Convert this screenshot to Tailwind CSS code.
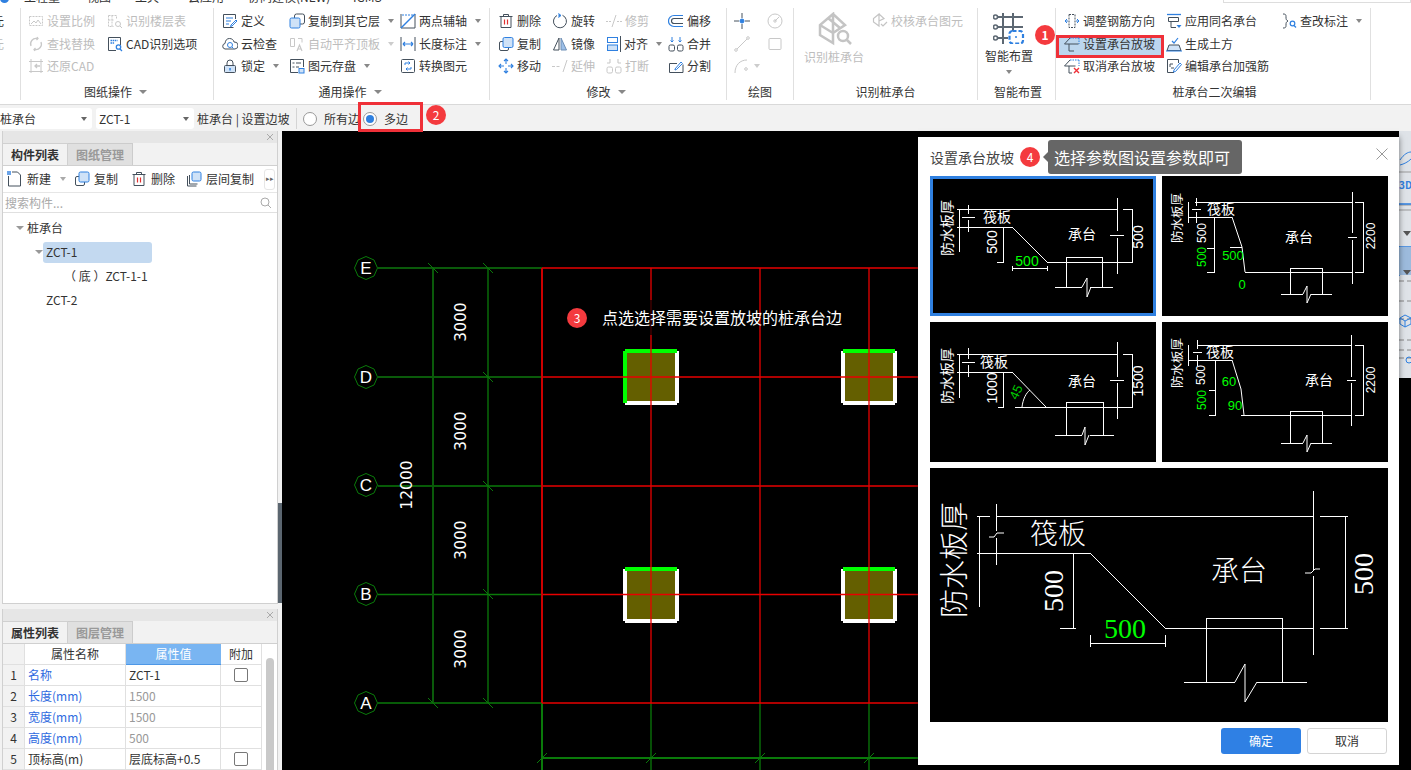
<!DOCTYPE html>
<html lang="zh">
<head>
<meta charset="utf-8">
<title>设置承台放坡</title>
<script src="https://cdn.jsdelivr.net/npm/@tailwindcss/browser@4"></script>
</head>
<body class="bg-white">
<div class="relative w-[1411px] h-[770px] overflow-hidden flex flex-col bg-white text-xs text-[#333] font-['Noto_Sans_CJK_SC',sans-serif]">

  <!-- clipped menu row -->
  <div class="relative h-[5px] shrink-0 overflow-hidden bg-white">
    <div class="absolute left-0 -top-[6px] w-[9px] h-[9px] rounded-full bg-[#2f80e0]"></div>
    <div class="absolute left-[24px] -top-[11px] flex text-xs whitespace-nowrap">
      <span class="w-[63px]">工程量</span><span class="w-[48px]">视图</span><span class="w-[53px]">工具</span><span class="w-[60px]">云应用</span><span class="w-[105px]">协同建模(NEW)</span><span>IGMS</span>
    </div>
    <div class="absolute left-[1223px] -top-[16px] w-[188px] h-[19px] border border-[#ddd] bg-white"></div>
  </div>

  <!-- ribbon -->
  <div class="flex h-[100px] shrink-0 border-b border-[#d9d9d9] bg-white">
    <div class="w-[20px] overflow-hidden pt-[5px]">
      <div class="h-[22.5px] flex items-center -ml-[8px]">元</div>
      <div class="h-[22.5px] flex items-center -ml-[8px] text-[#bdbdbd]">元</div>
    </div>
    <div class="w-px h-[92px] mt-[3px] bg-[#e0e0e0]"></div>

    <!-- 图纸操作 -->
    <div class="w-[192px] flex flex-col">
      <div class="h-[74px] pt-[5px] pl-[7px] grid grid-cols-[79px_1fr] auto-rows-[22.5px] items-center text-[#bdbdbd]">
        <div class="flex items-center gap-[3px]"><svg class="w-4 h-4" viewBox="0 0 16 16" fill="none" stroke="#c8c8c8"><rect x="1.500" y="3.500" width="13" height="9" stroke-dasharray="2 1"/><path d="M3 11l3-3 2 2 2-3 3 4"/></svg>设置比例</div>
        <div class="flex items-center gap-[3px]"><svg class="w-4 h-4" viewBox="0 0 16 16" fill="none" stroke="#c8c8c8"><path d="M1.500 2.500h8v4M1.500 2.500v11h5M5 2.500v11M1.500 7h5" stroke-dasharray="2 1"/><circle cx="11" cy="11" r="2.500"/><path d="M13 13l2 2"/></svg>识别楼层表</div>
        <div class="flex items-center gap-[3px]"><svg class="w-4 h-4" viewBox="0 0 16 16" fill="none" stroke="#c8c8c8"><path d="M3 10a5.500 5.500 0 0 1 6-7.500M13 6a5.500 5.500 0 0 1-6 7.500M9 1l1 1.500L8.500 4M7 15l-1-1.500L7.500 12" stroke-width="1.300"/></svg>查找替换</div>
        <div class="flex items-center gap-[3px] text-[#333]"><svg class="w-4 h-4" viewBox="0 0 16 16" fill="none" stroke="#44505c"><path d="M9 14.500H1.500v-13h12V9"/><path d="M3.500 4.500h7M3.500 7h4" stroke="#2f80e0" stroke-width="1.500" stroke-dasharray="1.500 .6"/><circle cx="11.500" cy="11" r="2.200" stroke="#2f80e0" stroke-width="1.300"/><path d="M13 13l2 2" stroke="#2f80e0" stroke-width="1.300"/></svg>CAD识别选项</div>
        <div class="flex items-center gap-[3px]"><svg class="w-4 h-4" viewBox="0 0 16 16" fill="none" stroke="#c8c8c8"><path d="M1 3.500h14M3 1v14M1 13.500h14M13 1v14"/><path d="M12 8H7M9 6L7 8l2 2" stroke-width="1.300"/></svg>还原CAD</div>
        <div></div>
      </div>
      <div class="h-[25px] flex items-center justify-center gap-[7px] pr-[3px]">图纸操作<span class="w-0 h-0 border-x-[4px] border-x-transparent border-t-[4px] border-t-[#888]"></span></div>
    </div>
    <div class="w-px h-[92px] mt-[3px] bg-[#e0e0e0]"></div>

    <!-- 通用操作 -->
    <div class="w-[275px] flex flex-col">
      <div class="h-[74px] pt-[5px] pl-[8px] grid grid-cols-[67px_111px_1fr] auto-rows-[22.5px] items-center">
        <div class="flex items-center gap-[3px]"><svg class="w-4 h-4" viewBox="0 0 16 16" fill="none" stroke="#44505c"><path d="M13.500 6V1.500h-12v13h10"/><path d="M4 5h7M4 8h5M4 11h3" stroke="#2f80e0"/><path d="M9 12l5-5 1 1-5 5-1.500.5z" stroke="#2f80e0"/></svg>定义</div>
        <div class="flex items-center gap-[3px]"><svg class="w-4 h-4" viewBox="0 0 16 16" fill="none"><rect x="5.500" y="1" width="10" height="10" rx="2" stroke="#44505c"/><rect x="1" y="5" width="10" height="10" rx="1.500" fill="#cfe2f7" stroke="#2f80e0"/></svg>复制到其它层<span class="ml-[5px] w-0 h-0 border-x-[3px] border-x-transparent border-t-[4px] border-t-[#888]"></span></div>
        <div class="flex items-center gap-[3px]"><svg class="w-4 h-4" viewBox="0 0 16 16" fill="none" stroke="#44505c"><path d="M1 1v14M15 1v14M1 15h14"/><path d="M1 15L15 1" stroke="#2f80e0" stroke-width="1.500"/><path d="M2 2h12" stroke="#2f80e0" stroke-dasharray="2 1"/></svg>两点辅轴<span class="ml-[5px] w-0 h-0 border-x-[3px] border-x-transparent border-t-[4px] border-t-[#888]"></span></div>

        <div class="flex items-center gap-[3px]"><svg class="w-4 h-4" viewBox="0 0 16 16" fill="none" stroke="#44505c"><path d="M4 13H3a2.800 2.800 0 0 1 0-5.500C3.400 4 5 2.500 7.500 2.500S11.600 4 12 6a3.500 3.500 0 0 1 1 7h-9z"/><circle cx="8" cy="9" r="2.500" stroke="#2f80e0"/><path d="M10 11l1.500 1.500" stroke="#2f80e0"/></svg>云检查</div>
        <div class="flex items-center gap-[3px] text-[#bdbdbd]"><svg class="w-4 h-4" viewBox="0 0 16 16" fill="none" stroke="#c8c8c8"><path d="M1.500 2.500h4v8h-4zM9 2.500h4v4"/><path d="M8 15l2.500-6 2.500 6M9 13h3" stroke-width="1.200"/></svg>自动平齐顶板<span class="ml-[5px] w-0 h-0 border-x-[3px] border-x-transparent border-t-[4px] border-t-[#ccc]"></span></div>
        <div class="flex items-center gap-[3px]"><svg class="w-4 h-4" viewBox="0 0 16 16" fill="none" stroke="#44505c"><path d="M1 1v14M15 1v14"/><path d="M3 8h10M3 8l2-2M3 8l2 2M13 8l-2-2M13 8l-2 2" stroke="#2f80e0" stroke-width="1.200"/></svg>长度标注<span class="ml-[5px] w-0 h-0 border-x-[3px] border-x-transparent border-t-[4px] border-t-[#888]"></span></div>

        <div class="flex items-center gap-[3px]"><svg class="w-4 h-4" viewBox="0 0 16 16" fill="none" stroke="#44505c"><rect x="2.500" y="7.500" width="11" height="7" rx="1" fill="#cfe2f7"/><path d="M5 7.500V5a3 3 0 0 1 6 0v2.500"/><path d="M8 10v2.500" stroke="#2f80e0" stroke-width="1.500"/></svg>锁定<span class="ml-[5px] w-0 h-0 border-x-[3px] border-x-transparent border-t-[4px] border-t-[#888]"></span></div>
        <div class="flex items-center gap-[3px]"><svg class="w-4 h-4" viewBox="0 0 16 16" fill="none" stroke="#44505c"><path d="M9 14.500H1.500v-13h13V9"/><path d="M3.500 5h2M3.500 9h2M7 5h5M7 9h3"/><rect x="10" y="10.500" width="5" height="4.500" fill="#cfe2f7" stroke="#2f80e0"/></svg>图元存盘<span class="ml-[5px] w-0 h-0 border-x-[3px] border-x-transparent border-t-[4px] border-t-[#888]"></span></div>
        <div class="flex items-center gap-[3px]"><svg class="w-4 h-4" viewBox="0 0 16 16" fill="none" stroke="#44505c"><rect x="1.500" y="1.500" width="13" height="13" rx="1"/><path d="M5 7V5h5M8.500 3.500L10 5 8.500 6.500M11 9v2H6M7.500 9.500L6 11l1.500 1.500" stroke="#2f80e0"/></svg>转换图元</div>
      </div>
      <div class="h-[25px] flex items-center justify-center gap-[7px] pr-[3px]">通用操作<span class="w-0 h-0 border-x-[4px] border-x-transparent border-t-[4px] border-t-[#888]"></span></div>
    </div>
    <div class="w-px h-[92px] mt-[3px] bg-[#e0e0e0]"></div>

    <!-- 修改 -->
    <div class="w-[236px] flex flex-col">
      <div class="h-[74px] pt-[5px] pl-[8px] grid grid-cols-[54px_54px_62px_1fr] auto-rows-[22.5px] items-center">
        <div class="flex items-center gap-[3px]"><svg class="w-4 h-4" viewBox="0 0 16 16" fill="none" stroke="#44505c"><path d="M1.500 3.500h13M3 3.500v11h10v-11M5.500 3.500V1.500h5v2"/><path d="M6.500 6.500v5M9.500 6.500v5" stroke="#e03030" stroke-width="1.200"/></svg>删除</div>
        <div class="flex items-center gap-[3px]"><svg class="w-4 h-4" viewBox="0 0 16 16" fill="none" stroke="#44505c"><path d="M10.500 2.300A6.500 6.500 0 1 1 5 2.500"/><path d="M6.500 .5L9 2.500 6.500 4.500" fill="#2f80e0" stroke="#2f80e0"/></svg>旋转</div>
        <div class="flex items-center gap-[3px] text-[#bdbdbd]"><svg class="w-4 h-4" viewBox="0 0 16 16" fill="none" stroke="#c8c8c8"><path d="M0 8.500h5M11 8.500h5" stroke-dasharray="2 1"/><path d="M6 14L10 2"/></svg>修剪</div>
        <div class="flex items-center gap-[3px]"><svg class="w-4 h-4" viewBox="0 0 16 16" fill="none" stroke="#2f80e0" stroke-width="1.200"><path d="M15 2.500H6a5.500 5.500 0 0 0 0 11h9"/><path d="M15 5.500H6a2.500 2.500 0 0 0 0 5h9" stroke="#44505c"/></svg>偏移</div>

        <div class="flex items-center gap-[3px]"><svg class="w-4 h-4" viewBox="0 0 16 16" fill="none" stroke="#44505c"><rect x="1.500" y="5.500" width="9" height="9" rx="1.500"/><rect x="5" y="1.500" width="10" height="10" rx="1.500" fill="#cfe2f7" stroke="#2f80e0"/></svg>复制</div>
        <div class="flex items-center gap-[3px]"><svg class="w-4 h-4" viewBox="0 0 16 16" fill="none" stroke="#44505c"><path d="M7 2L1.500 14H7z"/><path d="M9 2l5.500 12H9z" fill="#9cbfe8" stroke="#6f8fb5"/></svg>镜像</div>
        <div class="flex items-center gap-[3px]"><svg class="w-4 h-4" viewBox="0 0 16 16" fill="none" stroke="#2f80e0"><rect x="1.500" y="1.500" width="10" height="5"/><rect x="1.500" y="9" width="10" height="5.500" fill="#cfe2f7"/><path d="M14.500 0v16" stroke="#44505c"/></svg><span class="-ml-[1px]">对齐</span><span class="ml-[5px] w-0 h-0 border-x-[3px] border-x-transparent border-t-[4px] border-t-[#888]"></span></div>
        <div class="flex items-center gap-[3px]"><svg class="w-4 h-4" viewBox="0 0 16 16" fill="none" stroke="#44505c"><rect x="1" y="9" width="5.500" height="6" rx="1.500"/><rect x="9.500" y="9" width="5.500" height="6" rx="1.500"/><path d="M4 1v5M2.500 4.500L4 6l1.500-1.500M12 1v5M10.500 4.500L12 6l1.500-1.500" stroke="#2f80e0"/></svg>合并</div>

        <div class="flex items-center gap-[3px]"><svg class="w-4 h-4" viewBox="0 0 16 16" fill="none" stroke="#2f80e0" stroke-width="1.100"><path d="M8 1v5M8 10v5M1 8h5M10 8h5M6 3l2-2 2 2M6 13l2 2 2-2M3 6L1 8l2 2M13 6l2 2-2 2"/></svg>移动</div>
        <div class="flex items-center gap-[3px] text-[#bdbdbd]"><svg class="w-4 h-4" viewBox="0 0 16 16" fill="none" stroke="#c8c8c8"><path d="M0 8.500h9" stroke-dasharray="3 1.500"/><path d="M11 14l4-12"/></svg>延伸</div>
        <div class="flex items-center gap-[3px] text-[#bdbdbd]"><svg class="w-4 h-4" viewBox="0 0 16 16" fill="none" stroke="#c8c8c8"><rect x="1" y="9" width="5.500" height="6" rx="1.500"/><rect x="9.500" y="9" width="5.500" height="6" rx="1.500"/><path d="M4 1v4M12 1v4M1 5h3M12 5h3" stroke-width="1.100"/></svg>打断</div>
        <div class="flex items-center gap-[3px]"><svg class="w-4 h-4" viewBox="0 0 16 16" fill="none" stroke="#44505c"><path d="M15 6.500v8H1.500v-9H9"/><path d="M7 11l6-7 1.500 1.500L8.500 11.500 7 12z" stroke="#2f80e0"/></svg>分割</div>
      </div>
      <div class="h-[25px] flex items-center justify-center gap-[7px] pr-[4px]">修改<span class="w-0 h-0 border-x-[4px] border-x-transparent border-t-[4px] border-t-[#888]"></span></div>
    </div>
    <div class="w-px h-[92px] mt-[3px] bg-[#e0e0e0]"></div>

    <!-- 绘图 -->
    <div class="w-[66px] flex flex-col">
      <div class="h-[74px] pt-[5px] pl-[7px] grid grid-cols-[33px_33px] auto-rows-[22.5px] items-center">
        <svg class="w-4 h-4" viewBox="0 0 16 16" fill="none" stroke="#2f80e0"><path d="M8 0v5M8 11v5M0 8h5M11 8h5" stroke="#44505c"/><circle cx="8" cy="8" r="2" fill="#2f80e0"/></svg>
        <svg class="w-4 h-4" viewBox="0 0 16 16" fill="none" stroke="#c8c8c8"><circle cx="8" cy="8" r="7"/><circle cx="8" cy="8" r="1.200"/><path d="M8 8l4-4"/></svg>
        <svg class="w-4 h-4" viewBox="0 0 16 16" fill="none" stroke="#c8c8c8"><path d="M2 14L14 2"/><circle cx="2" cy="14" r="1.300" fill="white"/><circle cx="14" cy="2" r="1.300" fill="white"/></svg>
        <svg class="w-4 h-4" viewBox="0 0 16 16" fill="none" stroke="#c8c8c8"><rect x="2" y="2.500" width="12" height="11" rx="1"/></svg>
        <div class="flex items-center gap-[4px]"><svg class="w-4 h-4" viewBox="0 0 16 16" fill="none" stroke="#c8c8c8"><path d="M1 15C1 7 6 2 13 2"/><circle cx="12" cy="11" r="1.300"/></svg><span class="w-0 h-0 border-x-[3px] border-x-transparent border-t-[4px] border-t-[#ccc]"></span></div>
      </div>
      <div class="h-[25px] flex items-center justify-center">绘图</div>
    </div>
    <div class="w-px h-[92px] mt-[3px] bg-[#e0e0e0]"></div>

    <!-- 识别桩承台 -->
    <div class="w-[183px] flex flex-col">
      <div class="h-[74px] pt-[5px] pl-[10px] flex text-[#bdbdbd]">
        <div class="w-[68px] flex flex-col">
          <svg class="ml-[13px] mt-[2px] w-[35px] h-[34px]" viewBox="0 0 35 34" fill="none" stroke="#c4c4c4" stroke-width="2.500"><path d="M16 2L3 13l0 10 13 8V20zM16 2l12 11-12 8M3 13l13 8M11 6l12 10"/><circle cx="26" cy="24" r="5"/><path d="M30 28l4 4"/></svg>
          <span class="mt-[3px] whitespace-nowrap">识别桩承台</span>
        </div>
        <div class="flex items-center gap-[3px] h-[22.5px]"><svg class="w-4 h-4" viewBox="0 0 16 16" fill="none" stroke="#c4c4c4" stroke-width="1.200"><path d="M7 1L1.500 5.500V9L7 13V7zM7 1l5 4.500L7 8"/><path d="M9 11l2 2 4-4"/></svg>校核承台图元</div>
      </div>
      <div class="h-[25px] flex items-center justify-center">识别桩承台</div>
    </div>
    <div class="w-px h-[92px] mt-[3px] bg-[#e0e0e0]"></div>

    <!-- 智能布置 -->
    <div class="w-[77px] flex flex-col">
      <div class="h-[74px] flex flex-col items-center pr-[15px]">
        <svg class="mt-[8px] w-[32px] h-[31px]" viewBox="0 0 32 31" fill="none"><path d="M10 0v31M20 0v18M2 4h28M2 14h28M2 25h13" stroke="#5d6873" stroke-width="2"/><g stroke="#5d6873" stroke-width="1.600" fill="white"><circle cx="2.500" cy="4" r="2"/><circle cx="2.500" cy="14" r="2"/><circle cx="2.500" cy="25" r="2"/></g><rect x="16.500" y="18" width="13.500" height="12.500" rx="3" fill="white" stroke="#2f80e0" stroke-width="2.200" stroke-dasharray="4 2"/><circle cx="23" cy="24" r="1" fill="#2f80e0"/></svg>
        <span class="mt-[4px] whitespace-nowrap">智能布置</span>
        <span class="mt-[6px] w-0 h-0 border-x-[3px] border-x-transparent border-t-[4px] border-t-[#888]"></span>
      </div>
      <div class="h-[25px] flex items-center justify-center pl-[3px]">智能布置</div>
    </div>
    <div class="w-px h-[92px] mt-[3px] bg-[#e0e0e0]"></div>

    <!-- 桩承台二次编辑 -->
    <div class="w-[314px] flex flex-col">
      <div class="h-[74px] pt-[5px] pl-[8px] grid grid-cols-[102px_115px_1fr] auto-rows-[22.5px] items-center">
        <div class="flex items-center gap-[3px]"><svg class="w-4 h-4" viewBox="0 0 16 16" fill="none" stroke="#2f80e0"><path d="M4 8H1m0 0l2-2M1 8l2 2M12 8h3m0 0l-2-2m2 2l-2 2"/><path d="M5 1.500h6v13H5z" stroke="#44505c" stroke-dasharray="2 1"/></svg>调整钢筋方向</div>
        <div class="flex items-center gap-[3px]"><svg class="w-4 h-4" viewBox="0 0 16 16" fill="none" stroke="#44505c"><path d="M1 1.500h14" stroke="#2f80e0" stroke-width="1.300"/><path d="M2.500 4.500h10v4h-10zM5 8.500v6h5"/><path d="M10.500 12h5L13 15z" fill="#2f80e0" stroke="none"/></svg>应用同名承台</div>
        <div class="flex items-center gap-[3px]"><svg class="w-4 h-4" viewBox="0 0 16 16" fill="none" stroke="#44505c"><path d="M2 1c3 0 3 1 3 3s0 3 2 4c-2 1-2 2-2 4s0 3-3 3"/><circle cx="11.500" cy="10.500" r="2.300" stroke="#2f80e0" stroke-width="1.200"/><path d="M13 12.500l2 2" stroke="#2f80e0" stroke-width="1.200"/></svg>查改标注<span class="ml-[5px] w-0 h-0 border-x-[3px] border-x-transparent border-t-[4px] border-t-[#888]"></span></div>

        <div class="relative flex items-center gap-[3px]">
          <div class="absolute -left-[8px] top-[-1px] w-[108px] h-[23px] border-[3px] border-[#ef3038] bg-[#bcd6ee]"></div>
          <svg class="relative w-4 h-4" viewBox="0 0 16 16" fill="none" stroke="#44505c"><path d="M.5 8L6 2"/><path d="M6 2h9M15 2v6" stroke="#2f80e0" stroke-dasharray="1.500 1"/><path d="M.5 8h14"/><path d="M5 8v7h5"/></svg><span class="relative">设置承台放坡</span>
        </div>
        <div class="flex items-center gap-[3px]"><svg class="w-4 h-4" viewBox="0 0 16 16" fill="none" stroke="#44505c"><path d="M6 5l2 2 4-5" stroke="#2f80e0" stroke-width="1.200"/><path d="M3 9h10l2 5.500H1z" fill="#cfe2f7"/><path d="M0 15h16" stroke="#2f80e0"/></svg>生成土方</div>
        <div></div>

        <div class="flex items-center gap-[3px]"><svg class="w-4 h-4" viewBox="0 0 16 16" fill="none" stroke="#44505c"><path d="M.5 8L6 2"/><path d="M6 2h9M15 2v6" stroke="#2f80e0" stroke-dasharray="1.500 1"/><path d="M.5 8h11"/><path d="M5 8v7h3"/><path d="M10 10l5 5M15 10l-5 5" stroke="#ef3038" stroke-width="1.400"/></svg>取消承台放坡</div>
        <div class="flex items-center gap-[3px]"><svg class="w-4 h-4" viewBox="0 0 16 16" fill="none" stroke="#44505c"><path d="M8 14.500H1.500v-13h11V5"/><path d="M4 9V6h3M8 10H5"/><path d="M8 12l6-7 1.500 1.500-6 7-2 .5z" stroke="#2f80e0"/></svg>编辑承台加强筋</div>
        <div></div>
      </div>
      <div class="h-[25px] flex items-center justify-center pl-[3px]">桩承台二次编辑</div>
    </div>
    <div class="w-px h-[92px] mt-[3px] bg-[#e0e0e0]"></div>
    <div class="flex-1"></div>
  </div>

  <!-- options bar -->
  <div class="h-[26px] shrink-0 flex items-center bg-[#f2f2f2] pt-[1px]">
    <div class="w-[92px] h-[21px] bg-white rounded-r-[3px] flex items-center justify-between pr-[5px]"><span>桩承台</span><span class="w-0 h-0 border-x-[3px] border-x-transparent border-t-[4px] border-t-[#666]"></span></div>
    <div class="ml-[4px] w-[98px] h-[21px] bg-white rounded-[3px] flex items-center justify-between px-[3px] pr-[5px]"><span>ZCT-1</span><span class="w-0 h-0 border-x-[3px] border-x-transparent border-t-[4px] border-t-[#666]"></span></div>
    <span class="ml-[3px] w-[99px] whitespace-nowrap">桩承台 | 设置边坡</span>
    <span class="w-px h-[21px] bg-[#d4d4d4]"></span>
    <span class="ml-[6px] w-[14px] h-[14px] rounded-full border border-[#999] bg-white"></span>
    <span class="ml-[7px]">所有边</span>
    <span class="ml-[3px] w-[14px] h-[14px] rounded-full border border-[#999] bg-white flex items-center justify-center"><span class="w-[8px] h-[8px] rounded-full bg-[#2f80e0]"></span></span>
    <span class="ml-[7px]">多边</span>
  </div>

  <!-- main -->
  <div class="flex-1 flex min-h-0">
    <div class="w-[278px] shrink-0 bg-[#f2f2f2] pl-[2px] flex flex-col">
      <!-- component panel -->
      <div class="h-[473px] flex flex-col bg-white border border-[#d0d0d0] border-t-0">
        <div class="h-[12px] bg-[#e6e6e6] flex items-center justify-end pr-[3px] text-[#aaa]"><svg class="w-[8px] h-[8px]" viewBox="0 0 8 8" stroke="#aaa"><path d="M1 1l6 6M7 1L1 7"/></svg></div>
        <div class="h-[23px] flex bg-[#f2f2f2] border-b border-[#d0d0d0]">
          <div class="w-[65px] flex items-center justify-center font-bold border-r border-t border-[#d0d0d0]">构件列表</div>
          <div class="w-[65px] flex items-center justify-center text-[#999] font-bold bg-[#e0e0e0] border-r border-t border-[#ccc]">图纸管理</div>
        </div>
        <div class="h-[27px] flex items-center border-b border-[#e6e6e6] pl-[4px]">
          <div class="w-[67px] flex items-center gap-[4px]"><svg class="w-4 h-4" viewBox="0 0 16 16" fill="none" stroke="#44505c"><path d="M1.500 5v10h12V4l-3-3H5"/><rect x="0" y="0" width="4" height="4" fill="#6aa3e8" stroke="none"/></svg>新建<span class="ml-[5px] w-0 h-0 border-x-[3px] border-x-transparent border-t-[4px] border-t-[#aaa]"></span></div>
          <div class="w-[57px] flex items-center gap-[4px]"><svg class="w-4 h-4" viewBox="0 0 16 16" fill="none" stroke="#44505c"><rect x="1.500" y="5.500" width="9" height="9" rx="1.500"/><rect x="5" y="1" width="10" height="10" rx="1.500" fill="#cfe2f7" stroke="#2f80e0"/></svg>复制</div>
          <div class="w-[55px] flex items-center gap-[4px]"><svg class="w-4 h-4" viewBox="0 0 16 16" fill="none" stroke="#44505c"><path d="M1.500 3.500h13M3 3.500v11h10v-11M5.500 3.500V1.500h5v2"/><path d="M6.500 6.500v5M9.500 6.500v5" stroke="#e03030" stroke-width="1.200"/></svg>删除</div>
          <div class="w-[78px] flex items-center gap-[4px]"><svg class="w-4 h-4" viewBox="0 0 16 16" fill="none" stroke="#44505c"><path d="M1.500 5v10h9M3.500 4v9h8"/><rect x="6" y="1" width="9" height="9" rx="1.500" fill="#cfe2f7" stroke="#2f80e0"/></svg>层间复制</div>
          <div class="w-[11px] h-[21px] rounded-[3px] border border-[#e6e6e6] flex items-center justify-center text-[7px] text-[#666]">▸▸</div>
        </div>
        <div class="h-[20px] flex items-center justify-between px-[2px] pr-[5px] border-b border-[#e0e0e0] text-[#aaa]"><span>搜索构件...</span><svg class="w-[12px] h-[12px]" viewBox="0 0 12 12" fill="none" stroke="#aaa"><circle cx="5" cy="5" r="4"/><path d="M8 8l3 3"/></svg></div>
        <div class="flex-1 pt-[3px]">
          <div class="h-[24px] flex items-center pl-[13px] gap-[2px]"><span class="w-0 h-0 border-x-[4px] border-x-transparent border-t-[4px] border-t-[#999]"></span><span class="ml-[1px]">桩承台</span></div>
          <div class="h-[24px] flex items-center pl-[32px]"><span class="w-0 h-0 border-x-[4px] border-x-transparent border-t-[4px] border-t-[#999]"></span><span class="w-[109px] h-[21px] rounded-[3px] bg-[#c3d9f0] flex items-center pl-[3px]">ZCT-1</span></div>
          <div class="h-[24px] flex items-center pl-[61px]">（ 底 ）ZCT-1-1</div>
          <div class="h-[24px] flex items-center pl-[43px]">ZCT-2</div>
        </div>
      </div>
      <div class="h-[5px] shrink-0"></div>
      <!-- property panel -->
      <div class="flex-1 flex flex-col bg-white border-x border-[#d0d0d0] overflow-hidden">
        <div class="h-[12px] bg-[#e6e6e6] flex items-center justify-end pr-[3px]"><svg class="w-[8px] h-[8px]" viewBox="0 0 8 8" stroke="#aaa"><path d="M1 1l6 6M7 1L1 7"/></svg></div>
        <div class="h-[23px] flex bg-[#f2f2f2] border-b border-[#d0d0d0]">
          <div class="w-[65px] flex items-center justify-center font-bold border-r border-t border-[#d0d0d0]">属性列表</div>
          <div class="w-[65px] flex items-center justify-center text-[#999] font-bold bg-[#e0e0e0] border-r border-t border-[#ccc]">图层管理</div>
        </div>
        <div class="flex flex-1 min-h-0">
          <div class="w-[259px] grid grid-cols-[22px_101px_95px_41px] auto-rows-[21px]">
            <div class="bg-[#f2f2f2] border-r border-b border-[#e0e0e0]"></div>
            <div class="flex items-center justify-center border-r border-b border-[#e0e0e0]">属性名称</div>
            <div class="flex items-center justify-center bg-[#79b5f2] text-white border-b border-[#4d97e6]">属性值</div>
            <div class="flex items-center justify-center border-b border-r border-[#e0e0e0]">附加</div>

            <div class="bg-[#f2f2f2] flex items-center justify-center border-r border-b border-[#e0e0e0]">1</div>
            <div class="flex items-center pl-[3px] text-[#2f6be0] border-r border-b border-[#e0e0e0]">名称</div>
            <div class="flex items-center pl-[3px] border-r border-b border-[#e0e0e0]">ZCT-1</div>
            <div class="flex items-center justify-center border-r border-b border-[#e0e0e0]"><span class="w-[14px] h-[14px] rounded-[2px] border border-[#777] bg-white"></span></div>

            <div class="bg-[#f2f2f2] flex items-center justify-center border-r border-b border-[#e0e0e0]">2</div>
            <div class="flex items-center pl-[3px] text-[#2f6be0] border-r border-b border-[#e0e0e0]">长度(mm)</div>
            <div class="flex items-center pl-[3px] text-[#999] border-r border-b border-[#e0e0e0]">1500</div>
            <div class="border-r border-b border-[#e0e0e0]"></div>

            <div class="bg-[#f2f2f2] flex items-center justify-center border-r border-b border-[#e0e0e0]">3</div>
            <div class="flex items-center pl-[3px] text-[#2f6be0] border-r border-b border-[#e0e0e0]">宽度(mm)</div>
            <div class="flex items-center pl-[3px] text-[#999] border-r border-b border-[#e0e0e0]">1500</div>
            <div class="border-r border-b border-[#e0e0e0]"></div>

            <div class="bg-[#f2f2f2] flex items-center justify-center border-r border-b border-[#e0e0e0]">4</div>
            <div class="flex items-center pl-[3px] text-[#2f6be0] border-r border-b border-[#e0e0e0]">高度(mm)</div>
            <div class="flex items-center pl-[3px] text-[#999] border-r border-b border-[#e0e0e0]">500</div>
            <div class="border-r border-b border-[#e0e0e0]"></div>

            <div class="bg-[#f2f2f2] flex items-center justify-center border-r border-b border-[#e0e0e0]">5</div>
            <div class="flex items-center pl-[3px] border-r border-b border-[#e0e0e0]">顶标高(m)</div>
            <div class="flex items-center pl-[3px] border-r border-b border-[#e0e0e0] whitespace-nowrap">层底标高+0.5</div>
            <div class="flex items-center justify-center border-r border-b border-[#e0e0e0]"><span class="w-[14px] h-[14px] rounded-[2px] border border-[#777] bg-white"></span></div>
          </div>
          <div class="flex-1 pl-[4px] pt-[14px]"><div class="w-[8px] h-[120px] rounded-[4px] bg-[#c9c9c9]"></div></div>
        </div>
      </div>
    </div>

    <!-- splitter -->
    <div class="w-[4px] shrink-0 bg-[#f2f2f2] flex flex-col">
      <div class="h-[372px]"></div>
      <div class="h-[100px] bg-[#5b6670]"></div>
    </div>

    <!-- canvas -->
    <div class="relative flex-1 bg-black">
      <svg class="block w-[1129px] h-[639px]" viewBox="282 131 1129 639" fill="none">
        <g stroke="#0a7a0a" stroke-width="1.300">
          <path d="M378 486H542M378 594.500H542M378 703H542"/>
          <path d="M378 268H542M378 377H542M433 268V703" stroke="#0a5a0a" stroke-width="2"/>
          <path d="M488 268V703"/>
          <path d="M542 703V770" stroke-width="2"/>
          <path d="M651 703V770M760 703V770M869 703V770"/>
          <path d="M542 758H918" stroke-width="2"/>
        </g>
        <path d="M428 263l10 10M483 263l10 10M483 372l10 10M483 481l10 10M483 589l10 10M483 698l10 10M428 698l10 10M537 763l10-10M646 763l10-10M755 763l10-10M864 763l10-10" stroke="#0a7a0a"/>
        <g stroke="#0a7a0a" fill="black">
          <path d="M366 256.500l8 3.500 3.500 8-3.500 8-8 3.500-8-3.500-3.500-8 3.500-8z"/>
          <path d="M366 365.500l8 3.500 3.500 8-3.500 8-8 3.500-8-3.500-3.500-8 3.500-8z"/>
          <path d="M366 473.500l8 3.500 3.500 8-3.500 8-8 3.500-8-3.500-3.500-8 3.500-8z"/>
          <path d="M366 582.500l8 3.500 3.500 8-3.500 8-8 3.500-8-3.500-3.500-8 3.500-8z"/>
          <path d="M366 691.500l8 3.500 3.500 8-3.500 8-8 3.500-8-3.500-3.500-8 3.500-8z"/>
        </g>
        <g fill="white" font-family="Liberation Sans, sans-serif" font-size="17" text-anchor="middle">
          <text x="366" y="274">E</text><text x="366" y="383">D</text><text x="366" y="491">C</text><text x="366" y="600">B</text><text x="366" y="709">A</text>
        </g>
        <g fill="white" font-family="DejaVu Sans, sans-serif" font-size="15.500" text-anchor="middle">
          <text transform="translate(466 322) rotate(-90)">3000</text>
          <text transform="translate(466 431) rotate(-90)">3000</text>
          <text transform="translate(466 540) rotate(-90)">3000</text>
          <text transform="translate(466 649) rotate(-90)">3000</text>
          <text transform="translate(412 485) rotate(-90)">12000</text>
        </g>
        <!-- pile caps -->
        <g shape-rendering="crispEdges">
          <rect x="625" y="351" width="52" height="52" fill="#645f00"/><path d="M625 403h52M677 351v52" stroke="white" stroke-width="4"/><path d="M625 351h52M625 351v52" stroke="#00ff00" stroke-width="4"/>
          <rect x="843" y="351" width="52" height="52" fill="#645f00"/><path d="M843 403h52M895 351v52" stroke="white" stroke-width="4"/><path d="M843 351v52" stroke="white" stroke-width="4"/><path d="M843 351h52" stroke="#00ff00" stroke-width="4"/>
          <rect x="625" y="569" width="52" height="52" fill="#645f00"/><path d="M625 569v52M677 569v52M625 621h52" stroke="white" stroke-width="4"/><path d="M625 569h52" stroke="#00ff00" stroke-width="4"/>
          <rect x="843" y="569" width="52" height="52" fill="#645f00"/><path d="M843 569v52M895 569v52M843 621h52" stroke="white" stroke-width="4"/><path d="M843 569h52" stroke="#00ff00" stroke-width="4"/>
        </g>
        <g stroke="#e80000" stroke-width="1.300">
          <path d="M542 268H918M542 377H918M542 486H918M542 594.500H918M542 703H918"/>
          <path d="M542 268V703" stroke="#cc0000" stroke-width="2"/>
          <path d="M651 268V703"/>
          <path d="M760 268V703"/>
          <path d="M869 268V703"/>
        </g>
        <rect x="646" y="300" width="10" height="35" fill="black" fill-opacity=".7"/>
      </svg>

      <!-- right side toolbar behind dialog -->
      <div class="absolute right-0 top-0 w-[12px] h-[247px] overflow-hidden bg-[#dfe3e8]">
        <svg class="block w-[12px] h-[247px]" viewBox="1399 131 12 247" fill="none" stroke="#2f80e0">
          <path d="M1400 160c4-6 8-8 11-8M1400 165c4-1 8-3 11-6"/>
          <path d="M1399 172h12M1399 205h12M1399 210h12" stroke="#999"/>
          <path d="M1399 204h12M1399 247h12M1399 246v30" stroke-width="1.500"/>
          <rect x="1399" y="247" width="12" height="28" fill="#9dbbdd" stroke="none"/>
          <path d="M1403 231h8l-4 5zM1403 270h8l-4 5z" fill="#555" stroke="none"/>
          <path d="M1399 281h12M1399 301h12M1399 319h12M1399 340h12M1399 350h12M1399 358h12" stroke="#888" stroke-dasharray="5 3"/>
          <path d="M1400 318l5-3 6 3v6l-6 3-5-3zM1405 321v6M1400 318l5 3 6-3"/>
          <circle cx="1409" cy="360" r="3"/>
        </svg>
        <span class="absolute left-0 top-[49px] text-[10px] font-bold text-[#2f80e0] leading-none">3D</span>
      </div>

      <!-- step 3 caption -->
      <div class="absolute left-[320px] top-[178px] text-base text-white whitespace-nowrap leading-none">点选选择需要设置放坡的桩承台边</div>
      <span class="absolute left-[285px] top-[177px] w-[20px] h-[20px] rounded-full bg-[#f43a3e] text-white text-xs flex items-center justify-center">3</span>

      <!-- dialog -->
      <div class="absolute left-[636px] top-[6px] w-[481px] h-[628px] bg-white shadow-[0_0_6px_rgba(0,0,0,0.5)] flex flex-col px-[12px]">
        <div class="relative h-[39px] shrink-0 flex items-center">
          <span class="text-sm text-[#444] leading-none">设置承台放坡</span>
          <span class="ml-[6px] w-[20px] h-[20px] rounded-full bg-[#f43a3e] text-white text-xs flex items-center justify-center">4</span>
          <span class="ml-[3px] w-0 h-0 border-y-[5px] border-y-transparent border-r-[5px] border-r-[#666]"></span>
          <div class="w-[194px] h-[34px] rounded-[3px] bg-[#666] text-base text-white flex items-center pl-[6px] whitespace-nowrap leading-none">选择参数图设置参数即可</div>
          <svg class="absolute right-[-1px] top-[11px] w-[12px] h-[12px]" viewBox="0 0 12 12" stroke="#999"><path d="M.5.5l11 11M11.500.5l-11 11"/></svg>
        </div>
        <div class="grid grid-cols-[226px_226px] gap-[6px]">
          <!-- thumb 1 -->
          <svg class="block bg-black outline-3 -outline-offset-3 outline-[#2f80e0]" width="226" height="140" viewBox="0 0 226 140" fill="none" font-family="Liberation Sans, sans-serif">
            <g stroke="white">
              <path shape-rendering="crispEdges" d="M38 33.500H187M38 51.500H82M117 86.500H203M187.500 22V55M187.500 62V98M180 59.500H194M202.500 33V86M193 33.500H203M193 86.500H203M38.500 29V38M38.500 44V56M32 41.500H45M29.500 33V76M27 33.500H38M27 51.500H38M73.500 51V86M67 86.500H74M82.500 90V95M117.500 90V95M82 92.500H117M136.500 81V111M172.500 81V111M136.500 81.500H172M125 111.500H152M160 111.500H183"/>
              <path d="M82 51L117 86M152 111L157 102V121L161 111"/>
            </g>
            <g fill="white" font-size="14" text-anchor="middle" font-family="Noto Sans CJK SC, sans-serif">
              <text transform="translate(22 52) rotate(-90)">防水板厚</text>
              <text x="67" y="46">筏板</text>
              <text x="152" y="63">承台</text>
            </g>
            <g fill="white" font-size="14" text-anchor="middle">
              <text transform="translate(67 66) rotate(-90)">500</text>
              <text transform="translate(213 61) rotate(-90)">500</text>
            </g>
            <text x="97" y="90" fill="#00ff00" font-size="14" text-anchor="middle">500</text>
          </svg>
          <!-- thumb 2 -->
          <svg class="block bg-black" width="226" height="140" viewBox="0 0 226 140" fill="none" font-family="Liberation Sans, sans-serif">
            <g stroke="white">
              <path shape-rendering="crispEdges" d="M33 26.500H190M26 41.500H70M83 96.500H190M190.500 16V57M190.500 64V108M186 61.500H195M201.500 26V96M193 26.500H202M193 96.500H202M34.500 22V30M34.500 36V47M30 33.500H39M26.500 26V47M52.500 41V96M45 96.500H53M45 72.500H53M68 71.500H80M128.500 92V118M160.500 92V118M128.500 92.500H160M119 118.500H141M149 118.500H170"/>
              <path d="M70 41L80 71L83 96M141 118L145 110V127L149 118"/>
            </g>
            <g fill="white" font-size="12.500" text-anchor="middle" font-family="Noto Sans CJK SC, sans-serif">
              <text transform="translate(20 42) rotate(-90)">防水板厚</text>
              <text x="59" y="38" font-size="14">筏板</text>
              <text x="137" y="66" font-size="14">承台</text>
            </g>
            <g font-size="12" text-anchor="middle">
              <text fill="white" transform="translate(44 57) rotate(-90)">500</text>
              <text fill="white" transform="translate(213 60) rotate(-90)">2200</text>
              <text fill="#00ff00" transform="translate(44 81) rotate(-90)">500</text>
              <text fill="#00ff00" x="71" y="84" font-size="13">500</text>
              <text fill="#00ff00" x="80" y="113" font-size="13">0</text>
            </g>
          </svg>
          <!-- thumb 3 -->
          <svg class="block bg-black" width="226" height="140" viewBox="0 0 226 140" fill="none" font-family="Liberation Sans, sans-serif">
            <g stroke="white">
              <path shape-rendering="crispEdges" d="M38 32.500H187M38 50.500H82M85 85.500H203M187.500 20V55M187.500 61V97M180 58.500H194M202.500 32V85M193 32.500H203M29.500 32V76M27 32.500H38M27 50.500H38M38.500 26V37M38.500 43V55M32 40.500H45M73.500 50V85M68 85.500H74M136.500 80V113M173.500 80V113M136.500 80.500H173M125 113.500H152M160 113.500H184"/>
              <path d="M82 50L116 85M152 113L155 105V123L159 113M92 85C93 77 96 71 100 68"/>
            </g>
            <g fill="white" font-size="14" text-anchor="middle" font-family="Noto Sans CJK SC, sans-serif">
              <text transform="translate(22 54) rotate(-90)">防水板厚</text>
              <text x="64" y="45">筏板</text>
              <text x="152" y="64">承台</text>
            </g>
            <g fill="white" font-size="14" text-anchor="middle">
              <text transform="translate(67 66) rotate(-90)">1000</text>
              <text transform="translate(213 59) rotate(-90)">1500</text>
            </g>
            <text transform="translate(90 72) rotate(-65)" fill="#00cc00" font-size="13" text-anchor="middle">45</text>
          </svg>
          <!-- thumb 4 -->
          <svg class="block bg-black" width="226" height="140" viewBox="0 0 226 140" fill="none" font-family="Liberation Sans, sans-serif">
            <g stroke="white">
              <path shape-rendering="crispEdges" d="M35 23.500H189M26 38.500H70M79 93.500H189M189.500 13V55M189.500 61V104M185 58.500H194M201.500 23V93M193 23.500H202M193 93.500H202M35.500 18V27M35.500 33V44M31 30.500H40M26.500 23V44M53.500 38V93M47 93.500H54M47 68.500H54M128.500 89V121M160.500 89V121M128.500 89.500H160M119 121.500H141M149 121.500H170"/>
              <path d="M70 38L79 67L82 93M141 121L145 113V130L149 121"/>
            </g>
            <g fill="white" font-size="12.500" text-anchor="middle" font-family="Noto Sans CJK SC, sans-serif">
              <text transform="translate(20 41) rotate(-90)">防水板厚</text>
              <text x="58" y="35" font-size="14">筏板</text>
              <text x="157" y="63" font-size="14">承台</text>
            </g>
            <g font-size="12" text-anchor="middle">
              <text fill="white" transform="translate(43 53) rotate(-90)">500</text>
              <text fill="white" transform="translate(213 58) rotate(-90)">2200</text>
              <text fill="#00ff00" transform="translate(44 78) rotate(-90)">500</text>
              <text fill="#00ff00" x="67" y="64" font-size="13">60</text>
              <text fill="#00ff00" x="73" y="88" font-size="13">90</text>
            </g>
          </svg>
          <!-- large preview -->
          <svg class="col-span-2 block bg-black" width="458" height="254" viewBox="0 0 458 254" fill="none">
            <g stroke="white">
              <path shape-rendering="crispEdges" d="M67 48.500H383M47 85.500H161M235 160.500H383M383.500 23V102M383.500 108V187M390 48.500H418M390 160.500H418M415.500 48V161M66.500 36V63M66.500 70V97M49.500 48V139M47 48.500H60M47 85.500H60M143.500 86V160M130 160.500H146M160.500 167V179M235.500 167V179M160 175.500H235M276.500 150V214M352.500 150V214M276.500 150.500H352M254 214.500H305M327 214.500H377"/>
              <path d="M161 86L235 160M305 214L315 196V234L327 214M59 69H64L67 65L74 65M375 105H381L385 101L390 101"/>
            </g>
            <g fill="white" font-size="29" text-anchor="middle" font-family="Noto Sans CJK SC, sans-serif" font-weight="300">
              <text transform="translate(35 92) rotate(-90)">防水板厚</text>
              <text x="128" y="76" font-size="28">筏板</text>
              <text x="309" y="113" font-size="28">承台</text>
            </g>
            <g font-family="Liberation Serif, serif" font-size="28" text-anchor="middle">
              <text fill="white" transform="translate(133 123) rotate(-90)">500</text>
              <text fill="white" transform="translate(443 106) rotate(-90)">500</text>
              <text fill="#00ff00" x="195" y="170">500</text>
            </g>
          </svg>
        </div>
        <div class="mt-[6px] flex justify-end gap-[6px]">
          <div class="w-[80px] h-[26px] rounded-[3px] bg-[#2f80e4] text-white flex items-center justify-center">确定</div>
          <div class="w-[80px] h-[26px] rounded-[3px] bg-white border border-[#d4d4d4] flex items-center justify-center">取消</div>
        </div>
      </div>
    </div>
  </div>

  <!-- annotations over the options bar and ribbon -->
  <div class="absolute left-[358px] top-[102px] w-[65px] h-[30px] border-[3px] border-[#ef3038]"></div>
  <span class="absolute left-[426px] top-[105px] w-[20px] h-[20px] rounded-full bg-[#f43a3e] text-white text-xs flex items-center justify-center">2</span>
  <span class="absolute left-[1035px] top-[25px] w-[20px] h-[20px] rounded-full bg-[#f43a3e] text-white text-xs font-bold flex items-center justify-center">1</span>
</div>
</body>
</html>
